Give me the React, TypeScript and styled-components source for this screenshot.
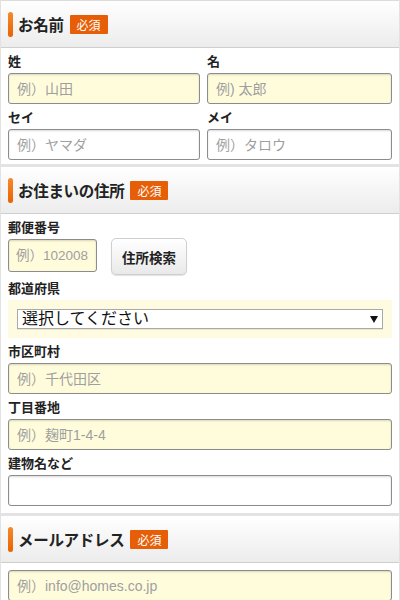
import React from "react";
import styled, { createGlobalStyle } from "styled-components";

const Global = createGlobalStyle`
  html, body { margin: 0; padding: 0; background: #fff; }
  body { font-family: "Liberation Sans", "Noto Sans CJK JP", sans-serif; color: #222; }
  * { box-sizing: border-box; }
`;

const Page = styled.div`
  width: 400px;
  border-left: 1px solid #e2e2e2;
  border-right: 1px solid #e2e2e2;
`;

const Section = styled.section`
  border-bottom: 3px solid #e3e3e3;
`;

const Header = styled.div<{ $first?: boolean }>`
  height: ${(p) => (p.$first ? 48 : 47)}px;
  display: flex;
  align-items: center;
  padding-left: 7px;
  border-top: ${(p) => (p.$first ? "1px solid #dcdcdc" : "none")};
  border-bottom: 1px solid #cfcfcf;
  background: linear-gradient(#ffffff, #ececec);
`;

const Bar = styled.span`
  width: 5px;
  height: 25px;
  border-radius: 3px;
  background: linear-gradient(#f58a2c, #ea6200);
`;

const Title = styled.h2`
  margin: 0 0 0 5px;
  font-size: 15.5px;
  font-weight: bold;
  color: #222;
  letter-spacing: -0.3px;
`;

const Badge = styled.span`
  margin-left: 6px;
  height: 19px;
  padding: 0 7px;
  display: inline-flex;
  align-items: center;
  background: #e65f08;
  color: #fff;
  font-size: 12px;
  border-radius: 1px;
`;

const Body = styled.div<{ $top?: number; $bottom?: number }>`
  padding: ${(p) => p.$top ?? 0}px 7px ${(p) => p.$bottom ?? 4}px;
`;

const Grid = styled.div`
  display: grid;
  grid-template-columns: 192px 1fr;
  column-gap: 7px;
`;

const Field = styled.div`
  padding-top: 5px;
  min-width: 0;
`;

const Label = styled.div`
  height: 18px;
  line-height: 18px;
  font-size: 13px;
  font-weight: bold;
  color: #222;
  margin-bottom: 2px;
`;

const Input = styled.input<{ $yellow?: boolean; $w?: number; $h?: number; $compact?: boolean }>`
  display: block;
  width: ${(p) => (p.$w ? `${p.$w}px` : "100%")};
  height: ${(p) => p.$h ?? 31}px;
  padding: ${(p) => (p.$compact ? "0 2px 0 7px" : "0 8px")};
  border: 1px solid #8c8c8c;
  border-radius: 3px;
  background: ${(p) => (p.$yellow ? "#fffcdc" : "#fff")};
  box-shadow: inset 0 1px 2px rgba(0, 0, 0, 0.15);
  font-family: inherit;
  font-size: ${(p) => (p.$compact ? 13.5 : 14)}px;
  color: #333;
  outline: none;
  &::placeholder { color: #9f9f9f; }
`;

const Row = styled.div`
  display: flex;
  align-items: flex-start;
`;

const Button = styled.button`
  margin-left: 14px;
  margin-top: -1px;
  width: 76px;
  height: 37px;
  border: 1px solid #cfcfcf;
  border-radius: 5px;
  background: linear-gradient(#ffffff, #e9e9e9);
  box-shadow: 0 1px 1px rgba(0, 0, 0, 0.12);
  font-family: inherit;
  font-size: 13.5px;
  font-weight: bold;
  color: #222;
  padding: 0;
`;

const SelectBand = styled.div`
  background: #fffbe0;
  padding: 9px;
`;

const SelectWrap = styled.div`
  position: relative;
`;

const Select = styled.select`
  display: block;
  width: 100%;
  height: 20px;
  appearance: none;
  -webkit-appearance: none;
  border: 1px solid #a9a9a9;
  border-radius: 0;
  background: #fff;
  padding: 0 0 0 4px;
  font-family: inherit;
  font-size: 16px;
  line-height: 18px;
  color: #111;
  box-shadow: 0 1px 0 rgba(0,0,0,0.08);
`;

const Arrow = styled.svg`
  position: absolute;
  right: 5px;
  top: 7px;
  pointer-events: none;
`;

export default function App() {
  return (
    <Page>
      <Global />
      <Section>
        <Header $first>
          <Bar />
          <Title>お名前</Title>
          <Badge>必須</Badge>
        </Header>
        <Body>
          <Grid>
            <Field>
              <Label>姓</Label>
              <Input $yellow placeholder="例）山田" />
            </Field>
            <Field>
              <Label>名</Label>
              <Input $yellow placeholder="例) 太郎" />
            </Field>
            <Field>
              <Label>セイ</Label>
              <Input placeholder="例）ヤマダ" />
            </Field>
            <Field>
              <Label>メイ</Label>
              <Input placeholder="例）タロウ" />
            </Field>
          </Grid>
        </Body>
      </Section>
      <Section>
        <Header>
          <Bar />
          <Title>お住まいの住所</Title>
          <Badge>必須</Badge>
        </Header>
        <Body $bottom={7}>
          <Field>
            <Label>郵便番号</Label>
            <Row>
              <Input $yellow $compact $w={89} $h={33} placeholder="例）102008" />
              <Button>住所検索</Button>
            </Row>
          </Field>
          <Field>
            <Label>都道府県</Label>
            <SelectBand>
              <SelectWrap>
                <Select defaultValue="">
                  <option value="">選択してください</option>
                </Select>
                <Arrow width="8" height="7" viewBox="0 0 8 7">
                  <path d="M0 0 L8 0 L4 7 Z" fill="#111" />
                </Arrow>
              </SelectWrap>
            </SelectBand>
          </Field>
          <Field>
            <Label>市区町村</Label>
            <Input $yellow placeholder="例）千代田区" />
          </Field>
          <Field>
            <Label>丁目番地</Label>
            <Input $yellow placeholder="例）麹町1-4-4" />
          </Field>
          <Field>
            <Label>建物名など</Label>
            <Input />
          </Field>
        </Body>
      </Section>
      <Section>
        <Header>
          <Bar />
          <Title>メールアドレス</Title>
          <Badge>必須</Badge>
        </Header>
        <Body $top={7}>
          <Input $yellow placeholder="例）info@homes.co.jp" />
        </Body>
      </Section>
    </Page>
  );
}
